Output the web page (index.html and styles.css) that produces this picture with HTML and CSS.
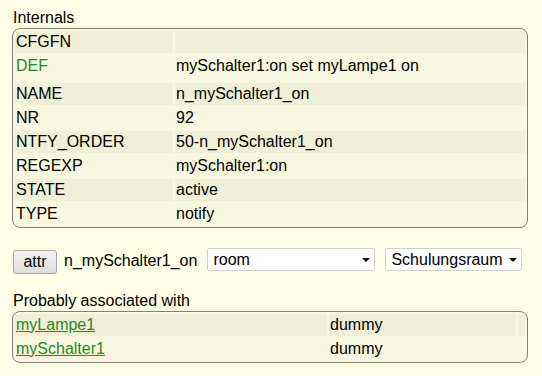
FILE: index.html
```html
<!DOCTYPE html>
<html>
<head>
<meta charset="utf-8">
<link rel="stylesheet" href="styles.css">
</head>
<body>
<div class="page">
  <div class="title">Internals</div>
  <table class="block internals">
    <tr class="odd"><td class="k">CFGFN</td><td class="v"></td></tr>
    <tr class="even def"><td class="k dname">DEF</td><td class="v">mySchalter1:on set myLampe1 on</td></tr>
    <tr class="odd"><td class="k">NAME</td><td class="v">n_mySchalter1_on</td></tr>
    <tr class="even"><td class="k">NR</td><td class="v">92</td></tr>
    <tr class="odd"><td class="k">NTFY_ORDER</td><td class="v">50-n_mySchalter1_on</td></tr>
    <tr class="even"><td class="k">REGEXP</td><td class="v">mySchalter1:on</td></tr>
    <tr class="odd"><td class="k">STATE</td><td class="v">active</td></tr>
    <tr class="even"><td class="k">TYPE</td><td class="v">notify</td></tr>
  </table>

  <form class="attrrow">
    <button type="button" class="btn">attr</button>
    <span class="devname">n_mySchalter1_on</span>
    <span class="sel sel-room"><select><option>room</option></select></span>
    <span class="sel sel-val"><select><option>Schulungsraum</option></select></span>
  </form>

  <div class="title title2">Probably associated with</div>
  <table class="block assoc">
    <tr class="odd"><td class="c1"><a href="#">myLampe1</a></td><td class="c2">dummy</td><td class="c3"></td></tr>
    <tr class="even"><td class="c1"><a href="#">mySchalter1</a></td><td class="c2">dummy</td><td class="c3"></td></tr>
  </table>
</div>
</body>
</html>
```

FILE: styles.css
```css
html, body {
  margin: 0;
  padding: 0;
  background: #FFFFE7;
}
body {
  font-family: "Liberation Sans", Arial, sans-serif;
  font-size: 16px;
  color: #000;
}
.page {
  padding: 8px 0 0 12px;
  width: 516px;
}
.title {
  height: 20px;
  line-height: 20px;
  padding-left: 1px;
}
.title2 {
  margin-top: 17px;
}
.block {
  width: 516px;
  box-sizing: border-box;
  border: 1px solid #808080;
  border-radius: 8px;
  border-spacing: 2px;
  border-collapse: separate;
  background: #F8F8E0;
  table-layout: fixed;
}
.block td {
  padding: 1px;
  height: 20px;
  line-height: 20px;
  white-space: nowrap;
  vertical-align: top;
}
.block tr.odd {
  background: #F0F0D8;
}
.internals td.k {
  width: 156px;
}
.internals tr.def td {
  padding-bottom: 5px;
}
.dname {
  color: #278727;
}
.assoc td.c1 { width: 310px; }
.assoc td.c2 { width: 185px; }
.assoc td.c3 { width: 5px; }
.assoc a {
  color: #278727;
  text-decoration: underline;
}
.attrrow {
  margin: 20px 0 0 0;
  display: flex;
  align-items: flex-start;
  height: 26px;
}
.btn {
  margin: 2px 0 0 1px;
  width: 44px;
  height: 24px;
  padding: 0;
  font-family: "Liberation Sans", Arial, sans-serif;
  font-size: 16px;
  color: #000;
  border: 1px solid #a8a8a8;
  border-radius: 3px;
  background: linear-gradient(#f4f4f4, #dedede);
  line-height: 22px;
}
.devname {
  margin-left: 7px;
  margin-top: 3px;
  line-height: 20px;
}
.sel {
  position: relative;
  display: inline-block;
  margin-left: 10px;
}
.sel select {
  appearance: none;
  -webkit-appearance: none;
  height: 23px;
  margin: 0;
  padding: 0 0 0 5px;
  border: 1px solid #cfcfcf;
  border-radius: 2px;
  background: #fff;
  font-family: "Liberation Sans", Arial, sans-serif;
  font-size: 16px;
  color: #000;
  line-height: 21px;
}
.sel-room select { width: 168px; }
.sel-val select { width: 137px; }
.sel-val { margin-left: 10px; }
.sel::after {
  content: "";
  position: absolute;
  right: 5px;
  top: 10px;
  width: 0;
  height: 0;
  border-left: 4px solid transparent;
  border-right: 4px solid transparent;
  border-top: 4px solid #111;
  pointer-events: none;
}
```
